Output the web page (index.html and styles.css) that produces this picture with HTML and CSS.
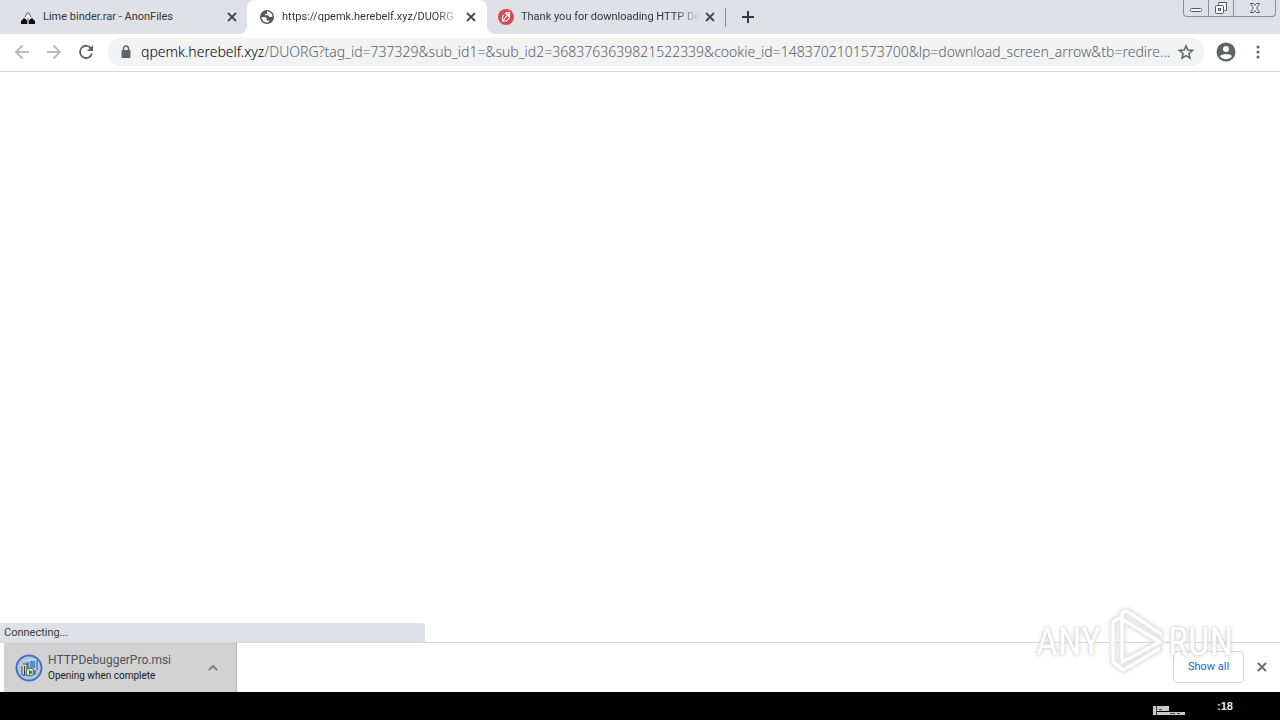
FILE: index.html
```html
<!DOCTYPE html>
<html lang="en">
<head>
<meta charset="utf-8">
<meta name="viewport" content="width=device-width, initial-scale=1">
<title>Browser</title>
<link rel="stylesheet" href="styles.css">
</head>
<body>
<div class="browser">
  <header class="tabstrip">
    <div class="tab tab-before">
      <svg class="favicon" viewBox="0 0 16 16"><path d="M1 15v-3l3-3 3 2v4zM9 15v-4l3-2 3 3v3z" fill="#111"/><path d="M5 9l3-5 3 5-3 3z" fill="#f0f0f0"/><path d="M5 8l2-4h2l2 4M8 9v6" fill="none" stroke="#666"/></svg>
      <span class="tab-title">Lime binder.rar - AnonFiles</span>
      <button class="close" aria-label="Close tab"><svg viewBox="0 0 10 10"><path d="M1 1l8 8M9 1L1 9"/></svg></button>
    </div>
    <div class="tab tab-active">
      <svg class="favicon" viewBox="0 0 16 16"><circle cx="8" cy="8" r="7" fill="#55595e"/><path d="M2.500 8h3.800l1.500 1.500v2h2.500v1.200l-2 1.100A5.800 5.800 0 0 1 2.500 8zM8 3.800V2.300a5.800 5.800 0 0 1 5.500 5.200l-1 .5h-2L9 6.300H6V5h2z" fill="#f4f5f6"/></svg>
      <span class="tab-title fade">https://qpemk.herebelf.xyz/DUORG</span>
      <button class="close" aria-label="Close tab"><svg viewBox="0 0 10 10"><path d="M1 1l8 8M9 1L1 9"/></svg></button>
    </div>
    <div class="tab tab-after">
      <svg class="favicon" viewBox="0 0 16 16"><circle cx="8" cy="8" r="8" fill="#d94b56"/><path d="M7 5l1.500-1.500H11.500V8.500L8.500 12H4.500V7.500L6 6M5 11.500l5.500-6.500M8 5h2.500v3" fill="none" stroke="#fff" stroke-width="1.100"/></svg>
      <span class="tab-title fade">Thank you for downloading HTTP De</span>
      <button class="close" aria-label="Close tab"><svg viewBox="0 0 10 10"><path d="M1 1l8 8M9 1L1 9"/></svg></button>
    </div>
    <button class="new-tab" aria-label="New tab"><svg viewBox="0 0 12 12"><path d="M6 0v12M0 6h12"/></svg></button>
    <div class="window-controls">
      <button aria-label="Minimize"><svg viewBox="0 0 24 16"><rect x="6.500" y="8.500" width="11" height="3" rx="1"/></svg></button>
      <button aria-label="Restore"><svg viewBox="0 0 24 16"><path d="M9.500 4.500v-2h8v8h-2"/><rect x="6.500" y="5.500" width="8" height="8" rx="1"/><rect x="9.500" y="8.500" width="2" height="2"/></svg></button>
      <button class="wide" aria-label="Close window"><svg viewBox="0 0 24 16"><path d="M7.500 3.500h3l1.500 2 1.500-2h3l-3 4.500 3 4.500h-3l-1.500-2-1.500 2h-3l3-4.500z"/></svg></button>
    </div>
  </header>

  <nav class="toolbar">
    <button class="nav disabled" aria-label="Back"><svg viewBox="0 0 16 16"><path d="M15 8H2M8.500 1.500L2 8l6.500 6.500"/></svg></button>
    <button class="nav disabled" aria-label="Forward"><svg viewBox="0 0 16 16"><path d="M1 8h13M7.500 1.500L14 8l-6.500 6.500"/></svg></button>
    <button class="nav" aria-label="Reload"><svg viewBox="0 0 16 16"><path d="M13.200 4.500A6.100 6.100 0 1 0 14 9.500"/><path d="M15 1v6H9z" class="solid"/></svg></button>
    <div class="omnibox">
      <svg class="lock" viewBox="0 0 10 14"><rect x="0.500" y="5" width="9" height="8" rx="1" fill="#5f6368"/><path d="M2.500 6V3.500a2.500 2.500 0 0 1 5 0V6" fill="none" stroke="#5f6368" stroke-width="1.400"/></svg>
      <div class="url"><b>qpemk.herebelf.xyz</b>/DUORG?tag_id=737329&amp;sub_id1=&amp;sub_id2=3683763639821522339&amp;cookie_id=1483702101573700&amp;lp=download_screen_arrow&amp;tb=redire...</div>
      <button class="nav star" aria-label="Bookmark"><svg viewBox="0 0 16 16"><path d="M8 1.800l1.800 4.300 4.700.4-3.600 3 1.100 4.600L8 11.700l-4 2.400 1.100-4.600-3.600-3 4.700-.4z"/></svg></button>
    </div>
    <button class="nav profile" aria-label="Profile"><svg viewBox="0 0 20 20"><circle cx="10" cy="10" r="9.500" class="solid"/><circle cx="10" cy="7" r="3" fill="#fff" stroke="none"/><path d="M4 14.200c1-2.500 11-2.500 12 0a7.500 7.500 0 0 1-12 0z" fill="#fff" stroke="none"/></svg></button>
    <button class="nav menu" aria-label="Menu"><svg viewBox="0 0 4 16"><circle cx="2" cy="3" r="1.500"/><circle cx="2" cy="8" r="1.500"/><circle cx="2" cy="13" r="1.500"/></svg></button>
  </nav>

  <main class="page"><div class="status">Connecting...</div></main>

  <footer class="shelf">
    <div class="download">
      <svg class="file-icon" viewBox="0 0 28 28"><circle cx="14" cy="14" r="12.500" fill="#b3c8df" stroke="#3f73c4" stroke-width="2"/><path d="M14 6h7v9h-7z" fill="#4a92dc" stroke="#e8eef4"/><path d="M22 6v10M8 10h4v11H7V12" fill="#dcd6c0" stroke="#454f56"/><path d="M9.500 12v9M13 8v9M20 16v4h-4" stroke="#303a40" fill="none"/><circle cx="15" cy="18" r="4" fill="#d5e5c9" stroke="#4a6852"/><path d="M14 16l4 2-4 3z" fill="#238442"/></svg>
      <div class="file-text"><div class="file-name">HTTPDebuggerPro.msi</div><div class="file-state">Opening when complete</div></div>
      <button class="nav caret" aria-label="Download options"><svg viewBox="0 0 10 6"><path d="M.8 5.200L5 1l4.200 4.200"/></svg></button>
    </div>
    <button class="show-all">Show all</button>
    <button class="close shelf-close" aria-label="Close downloads bar"><svg viewBox="0 0 10 10"><path d="M1 1l8 8M9 1L1 9"/></svg></button>
  </footer>

  <div class="taskbar">
    <svg class="tray" viewBox="0 0 32 9"><path d="M0 0h3v9H0zM4 0h12v5H4zM4 6h28v3H4z" fill="#c9c9c5"/><path d="M3.500 1v8M6 3.500h3M17 7.500h5M24 7.500h3" stroke="#444"/></svg>
    <span class="clock">:18</span>
  </div>

  <div class="watermark"><span>ANY</span>
    <svg viewBox="0 0 60 68"><g fill="none" stroke-linejoin="round" stroke-linecap="round"><path class="halo" d="M6 54V14l6-4M15 51V5l5-2 34 23M15 11l38 23-38 20M6 54l10 8 36-21"/><path class="core" d="M6 54V14l6-4M15 51V5l5-2 34 23M15 11l38 23-38 20M6 54l10 8 36-21"/></g></svg>
    <span>RUN</span></div>
</div>
</body>
</html>
```
FILE: styles.css
```css
* { box-sizing: border-box; }
body { margin: 0; font: 11px/16px Roboto, "Noto Sans", sans-serif; color: #3c4043; }
button { border: 0; background: none; padding: 0; margin: 0; font: inherit; color: inherit; }
svg { display: block; flex: none; }
.browser { position: relative; display: flex; flex-direction: column; min-height: 100vh; overflow: hidden; background: #fff; }
.tabstrip { display: flex; height: 34px; background: #fff; }
.tab { display: flex; align-items: center; flex: 0 1 240px; min-width: 0; padding: 0 11px 0 12px; background: #dee1e6; }
.tab-before { flex-basis: 247px; padding-left: 20px; padding-right: 10px; border-bottom-right-radius: 8px; }
.tab-active { background: #fff; position: relative; }
.tab-active::before { content: ""; position: absolute; inset: 0 0 16px 0; z-index: 0; background: #dee1e6; }
.tab-active::after { content: ""; position: absolute; inset: 0; background: #fff; border-radius: 8px 8px 0 0; }
.tab-active > * { position: relative; z-index: 1; }
.tab-after { flex-basis: 238px; padding-left: 11px; padding-right: 10px; border-bottom-left-radius: 8px; }
.favicon { width: 16px; height: 16px; }
.tab-title { flex: 1; min-width: 0; margin: 0 5px 0 7px; line-height: 18px; white-space: nowrap; overflow: hidden; color: #33373b; }
.fade { mask-image: linear-gradient(to right, #000 86%, transparent); }
.close svg { width: 10px; height: 10px; fill: none; stroke: #45494d; stroke-width: 1.800; }
.new-tab { display: flex; align-items: center; width: 40px; padding-left: 17px; background: #dee1e6; position: relative; }
.new-tab::before { content: ""; position: absolute; left: 0; top: 8px; width: 1px; height: 19px; background: #898d92; }
.new-tab svg { width: 12px; height: 12px; stroke: #34383c; stroke-width: 2; }
.window-controls { flex: 1; display: flex; justify-content: flex-end; align-items: flex-start; padding-right: 4px; background: #dee1e6; }
.window-controls button { display: flex; justify-content: center; width: 26px; height: 17px; border: 1px solid #8a8e96; border-top: 0; margin-left: -1px; }
.window-controls button:first-child { border-bottom-left-radius: 4px; }
.window-controls .wide { width: 43px; border-bottom-right-radius: 4px; }
.window-controls svg { width: 24px; height: 16px; fill: #f6f7f8; stroke: #555962; }
.toolbar { display: flex; align-items: center; height: 38px; padding: 0 14px 2px; border-bottom: 1px solid #d5d7da; }
.nav svg { width: 16px; height: 16px; fill: none; stroke: #5f6368; stroke-width: 1.800; }
.nav { margin-right: 16px; }
.disabled svg { stroke: #b8babd; }
.nav .solid { fill: #5f6368; stroke: none; }
.omnibox { flex: 1; min-width: 0; display: flex; align-items: center; height: 28px; padding: 0 10px 0 13px; margin-right: 12px; margin-left: -2px; border-radius: 14px; background: #f1f3f4; }
.lock { width: 10px; height: 14px; }
.url { flex: 1; min-width: 0; margin-left: 10px; font: 300 14px/20px "Noto Sans", "Open Sans", sans-serif; white-space: nowrap; overflow: hidden; color: #5c6064; }
.url b { font-weight: 300; color: #000; }
.star { margin: 0 0 0 4px; }
.star svg { stroke-width: 1.500; }
.profile svg { width: 20px; height: 20px; }
.profile { margin-right: 20px; }
.menu { margin-right: 6px; }
.menu svg { width: 4px; fill: #5f6368; stroke: none; }
.page { flex: 1; display: flex; align-items: flex-end; }
.status { width: 425px; height: 19px; padding: 2px 4px; border-top-right-radius: 4px; background: #dee1e6; }
.shelf { display: flex; align-items: center; height: 50px; padding: 0 13px 2px 4px; border-top: 1px solid #d5d7da; }
.download { display: flex; align-items: center; align-self: stretch; width: 233px; margin-bottom: -2px; padding-left: 11px; background: #d2d2d2; border-right: 1px solid #b4b4b4; }
.file-icon { width: 28px; height: 28px; }
.file-text { flex: 1; margin-left: 5px; }
.file-name { font-size: 12px; color: #505357; }
.file-state { font-size: 10px; color: #202124; }
.caret { margin-right: 18px; }
.caret svg { width: 10px; height: 6px; stroke: #77797c; }
.show-all { width: 71px; height: 32px; margin-left: auto; border: 1px solid #d5d8dc; border-radius: 4px; color: #2866bd; }
.shelf-close { margin-left: 13px; }
.shelf-close svg { stroke: #67696c; }
.taskbar { display: flex; align-items: center; justify-content: flex-end; height: 28px; padding-right: 47px; background: #000; color: #e8e5e0; }
.tray { width: 32px; height: 9px; margin: 9px 32px 0 0; }
.clock { font: bold 11px/12px "Liberation Sans", sans-serif; }
.watermark { position: absolute; right: 47px; bottom: 44px; display: flex; align-items: center; height: 68px; pointer-events: none; color: #fff; font: 38px/68px "Roboto Condensed", "Open Sans Condensed", "Liberation Sans Narrow", "DejaVu Sans Condensed", sans-serif; text-shadow: 0 0 2px #ccc, 0 0 4px #ccc; }
.watermark svg { width: 60px; height: 68px; margin: 0 1px 0 6px; filter: drop-shadow(0 0 2px #ddd); }
.halo { stroke: #e9e9e9; stroke-width: 6; }
.core { stroke: #fff; stroke-width: 3; }
```
